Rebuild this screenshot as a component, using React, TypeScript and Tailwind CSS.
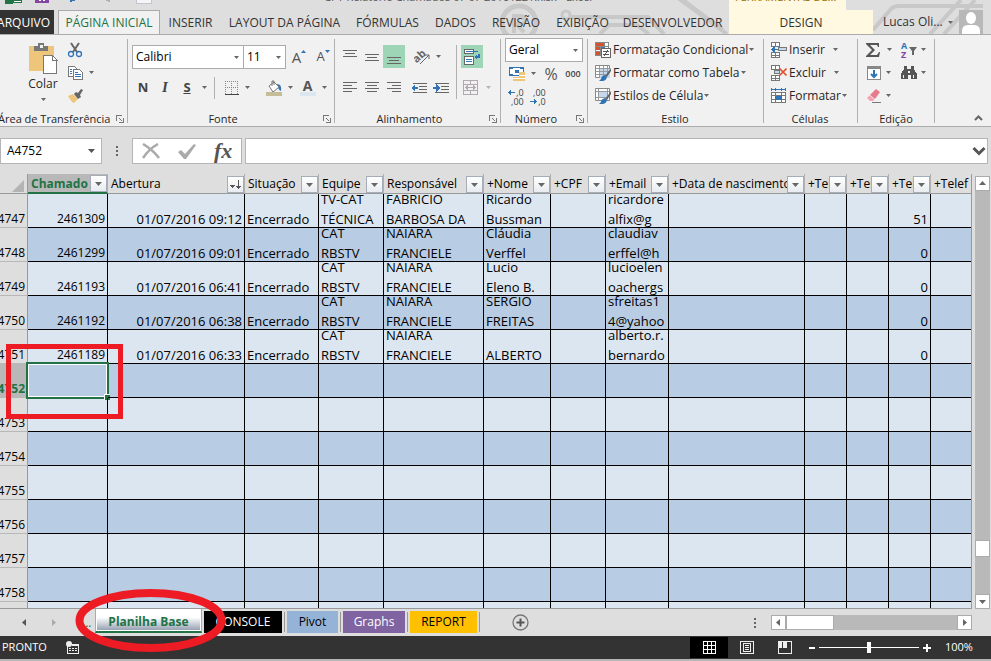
import type { ReactNode } from "react";

const ui = "font-['Open_Sans','Noto_Sans',sans-serif]";

function Caret({ light = false }: { light?: boolean }) {
  return (
    <svg width="5" height="3" viewBox="0 0 5 3" className={light ? "shrink-0 fill-[#b5b5b5]" : "shrink-0 fill-[#666]"} aria-hidden="true">
      <path d="M0 0h5L2.500 3z" />
    </svg>
  );
}

function Svg({ w = 16, h = 16, children, crisp = true }: { w?: number; h?: number; children: ReactNode; crisp?: boolean }) {
  return (
    <svg width={w} height={h} viewBox={`0 0 ${w} ${h}`} fill="none" shapeRendering={crisp ? "crispEdges" : "auto"} className="shrink-0" aria-hidden="true">
      {children}
    </svg>
  );
}

function Tool({ label, className = "w-[22px]", children }: { label: string; className?: string; children: ReactNode }) {
  return (
    <button type="button" aria-label={label} className={`flex h-[23px] shrink-0 items-center justify-center ${className}`}>
      {children}
    </button>
  );
}

function Launcher() {
  return (
    <button type="button" aria-label="Mais opções" className="absolute right-[3px] bottom-0">
      <Svg w={8} h={8}>
        <path d="M.5 6V.5H6M3 3l3 3M7.500 3v4.500H3" stroke="#777" />
      </Svg>
    </button>
  );
}

function Group({ title, className, launcher = false, align = "text-center", children }: { title: string; className: string; launcher?: boolean; align?: string; children: ReactNode }) {
  return (
    <section aria-label={title} className={`relative flex h-[84px] shrink-0 flex-col border-r border-[#b0b0b0] ${className}`}>
      <div className="-mt-px flex-1">{children}</div>
      <h2 className={`h-2 text-[11px] leading-2 whitespace-nowrap ${align}`}>{title}</h2>
      {launcher && <Launcher />}
    </section>
  );
}

function Picker({ label, value, className }: { label: string; value: string; className: string }) {
  return (
    <div className={`relative flex h-6 shrink-0 items-center border border-[#ababab] bg-white ${className}`}>
      <select aria-label={label} defaultValue={value} className="h-full w-full appearance-none bg-transparent pl-[3px] text-xs text-black outline-none">
        <option>{value}</option>
      </select>
      <span className="pointer-events-none absolute right-1 flex">
        <Caret />
      </span>
    </div>
  );
}

function Lines({ rows }: { rows: [number, number, number][] }) {
  return (
    <Svg w={14} h={14}>
      {rows.map(([x, y, w]) => (
        <path key={y} d={`M${x} ${y + 0.5}h${w}`} stroke="#666" />
      ))}
    </Svg>
  );
}

const tabs = [
  { name: "INSERIR", cls: "w-[61px]" },
  { name: "LAYOUT DA PÁGINA", cls: "w-[127px]" },
  { name: "FÓRMULAS", cls: "w-[79px]" },
  { name: "DADOS", cls: "w-[57px]" },
  { name: "REVISÃO", cls: "w-[64px]" },
  { name: "EXIBIÇÃO", cls: "w-[69px]" },
  { name: "DESENVOLVEDOR", cls: "w-[111px]" },
];

function Header() {
  return (
    <header className="relative h-[34px] shrink-0 overflow-hidden">
      <svg className="absolute top-0 right-0" width="500" height="34" viewBox="0 0 500 34" fill="none" stroke="#c8c8c8" strokeWidth="4" aria-hidden="true">
        <circle cx="28" cy="23" r="17" strokeWidth="5" />
        <path d="M23 33V16h7a4 4 0 0 1 0 8h-5l8 8" />
        <circle cx="75" cy="15" r="4" strokeWidth="3" />
        <path d="M79 17h78l16 17M109 34l9-9h28l12 9M187 -2l49 36M192 0l40 30" />
        <path d="M382 30L400 9q3-3 8-3h84M439 34L470 0M453 34L484 0" />
      </svg>
      <div className="relative flex h-[10px] overflow-hidden">
        <div className="flex w-[324px] items-start">
          <Svg w={160} h={10}>
            <path d="M5 0h8v4H5z" fill="#217346" />
            <path d="M13 0h8v2h-8z" fill="#fff" stroke="#217346" />
            <path d="M35 0h14v3H35z" fill="#8445a5" />
            <path d="M39 0h2v1h-2zM43 0h2v1h-2z" fill="#fff" />
            <path d="M70 0h5v1h-3v1h-2z" fill="#2f75b5" />
            <path d="M106 0h4v2h-2V1h-2z" fill="#b0b0b0" />
            <path d="M136.500 0v3.500h15V0" fill="#f5f5f8" stroke="#c4c4cc" />
          </Svg>
        </div>
        <p className="-mt-[11px] h-4 flex-1 text-[11px] leading-4 whitespace-nowrap text-[#555]">CPT Relatório Chamados 07 07 20161221.xlsx - Excel</p>
        <p className="mr-[145px] h-[10px] w-[117px] shrink-0 bg-[#fff9e1] pl-[6px] text-[11px] whitespace-nowrap text-[#957000]">
          <span className="-mt-[11px] block leading-4">FERRAMENTAS DE...</span>
        </p>
      </div>
      <nav className="relative flex h-6 text-xs leading-[22px] whitespace-nowrap text-[#333]">
        <button type="button" className="flex w-[54px] shrink-0 justify-end bg-[#333] pt-[2px] pr-1 text-white">ARQUIVO</button>
        <button type="button" className="ml-1 w-[102px] shrink-0 border border-b-0 border-[#ababab] bg-[#f1f1f1] pt-px text-[#217346]">PÁGINA INICIAL</button>
        {tabs.map((t) => (
          <button key={t.name} type="button" className={`shrink-0 pt-[2px] text-center ${t.cls}`}>{t.name}</button>
        ))}
        <div className="flex-1" />
        <button type="button" className="w-36 shrink-0 bg-[#fff9e1] pt-[2px]">DESIGN</button>
        <button type="button" className="flex w-[86px] shrink-0 items-center justify-between pr-[6px] pl-[10px]">
          Lucas Oli... <Caret />
        </button>
        <div className="mr-2 h-6 w-6 shrink-0 bg-[#b8b8b8]">
          <Svg w={24} h={24} crisp={false}>
            <ellipse cx="12" cy="8" rx="5" ry="6" fill="#fff" />
            <path d="M3 24v-3q0-6 6-6h6q6 0 6 6v3z" fill="#fff" />
          </Svg>
        </div>
      </nav>
    </header>
  );
}

function TableIcon({ kind }: { kind: "cond" | "table" | "cell" }) {
  if (kind === "cond")
    return (
      <Svg>
        <path d="M.5.5h13v13H.5zM5 .5v13M9.500 .5v6M0 4.500h14M0 9.500h6" stroke="#888" fill="#fff" />
        <path d="M1 1h8v3H1zM1 5h4v3H1zM1 10h4v3H1z" fill="#d35230" />
        <path d="M6 5h4v3H6z" fill="#3a7ab8" />
        <path d="M6.500 6.500h9v9h-9z" fill="#fff" stroke="#666" />
        <path d="M8 9.500h6M8 12.500h6M12.500 8l-3 6" stroke="#555" />
      </Svg>
    );
  return (
    <Svg crisp={false}>
      <path d="M.5.5h14v12H.5z" fill="#fff" stroke="#888" />
      {kind === "table" ? <path d="M5 4h10v9H5z" fill="#c5d9ee" /> : <path d="M4 4h8v6H4z" fill="#c5d9ee" />}
      {kind === "table" ? (
        <path d="M4.500 1v12M8.500 1v12M12.500 1v8M1 3.500h13M1 6.500h13M1 9.500h10" stroke="#999" />
      ) : (
        <path d="M3.500 1v12M12.500 1v8M1 3.500h13M1 9.500h10" stroke="#999" />
      )}
      <path d="M16 3l-6 8 2 1 4-6z" fill="#666" />
      <path d="M10 10q-4 1-4 4l-2 2q7 1 8-4z" fill="#2f75b5" />
    </Svg>
  );
}

function CellsIcon({ kind }: { kind: "ins" | "del" | "fmt" }) {
  if (kind === "fmt")
    return (
      <Svg>
        <path d="M1 1.500h13M.5 0v3M14.500 0v3M4.500 0v3M10.500 0v3" stroke="#2f75b5" />
        <path d="M.5 4.500h14v10H.5zM4.500 4v11M10.500 4v11M0 7.500h15M0 11.500h15" stroke="#777" fill="#fff" />
        <path d="M4 8h7v4H4z" fill="#2f75b5" />
      </Svg>
    );
  return (
    <Svg>
      <path d="M.5.5h8v4h-8zM4.500 0v5M.5 10.500h8v5h-8zM4.500 10v6M.5 13h8" stroke="#777" fill="#fff" />
      {kind === "ins" ? (
        <>
          <path d="M7.500 5.500h8v3h-8z" fill="#c5d9ee" stroke="#777" />
          <path d="M1 7.500h6" stroke="#2f75b5" />
          <path d="M0 7.500L4 4v7z" fill="#2f75b5" />
        </>
      ) : (
        <>
          <path d="M3.500 5.500h5v3h-5z" fill="#c5d9ee" stroke="#777" />
          <path d="M8.500 3.500l7 7M15.500 3.500l-7 7" stroke="#e0522c" strokeWidth="1.700" shapeRendering="auto" />
        </>
      )}
    </Svg>
  );
}

function Command({ icon, text, gap = "gap-px" }: { icon: ReactNode; text: string; gap?: string }) {
  return (
    <button type="button" className="flex h-[23px] items-center gap-[2px] whitespace-nowrap">
      {icon}
      <span className={`flex items-center text-[12px] ${gap}`}>
        {text} <Caret />
      </span>
    </button>
  );
}

function Ribbon() {
  return (
    <div className="relative flex h-[93px] shrink-0 border-t border-b border-[#ababab] bg-[#f1f1f1] pt-1 text-[#262626]">
      <Group title="Área de Transferência" className="w-32" align="-ml-[2px]" launcher>
        <div className="flex pt-px pl-[26px]">
          <button type="button" className="flex w-[34px] flex-col items-center pt-1 text-xs">
            <Svg w={30} h={31}>
              <path d="M1 3h25v25H1z" fill="#edc57b" />
              <path d="M6 3h4V0h6v3h4v5H6z" fill="#777" />
              <path d="M12 2h3v3h-3z" fill="#f1f1f1" />
              <path d="M15.500 12.500h9l4 4v14h-13z" fill="#fff" stroke="#777" />
              <path d="M24.500 12v5h5" stroke="#777" />
            </Svg>
            <span className="mt-[2px] mb-[6px] leading-4">Colar</span>
            <Caret />
          </button>
          <div className="flex flex-col pl-[7px]">
            <button type="button" aria-label="Recortar" className="flex h-[22px] items-center">
              <Svg crisp={false}>
                <path d="M4 1l6 9M12 1L6 10" stroke="#666" strokeWidth="2" />
                <circle cx="4" cy="12" r="2.500" stroke="#2f75b5" strokeWidth="1.300" />
                <circle cx="12" cy="12" r="2.500" stroke="#2f75b5" strokeWidth="1.300" />
              </Svg>
            </button>
            <button type="button" aria-label="Copiar" className="flex h-[23px] items-center gap-[6px]">
              <Svg>
                <path d="M1.500 1.500h6l2 2v8h-8z" fill="#fff" stroke="#777" />
                <path d="M6.500 4.500h6l3 3v7h-9z" fill="#fff" stroke="#777" />
                <path d="M3 4.500h2M3 6.500h2M3 8.500h2M8 7.500h3M8 9.500h6M8 11.500h6" stroke="#2f75b5" />
              </Svg>
              <Caret />
            </button>
            <button type="button" aria-label="Pincel de Formatação" className="flex h-[23px] items-center">
              <Svg crisp={false}>
                <path d="M1 8l5-2 5 5-4 4q-2 0-6-7z" fill="#edc57b" />
                <path d="M7 6l2-2 2 1 3-4 2 1-3 5 1 2-3 2z" fill="#666" />
              </Svg>
            </button>
          </div>
        </div>
      </Group>

      <Group title="Fonte" className="w-[207px]" align="pr-4 text-center" launcher>
        <div className="flex items-center pt-[7px] pl-1">
          <Picker label="Fonte" value="Calibri" className="w-[112px]" />
          <Picker label="Tamanho da fonte" value="11" className="-ml-px w-[43px]" />
          <Tool label="Aumentar fonte" className="ml-1 w-[18px]">
            <span className="text-[15px] text-[#555]">A</span>
            <svg width="5" height="3" viewBox="0 0 5 3" className="mb-3 fill-[#2f75b5]" aria-hidden="true"><path d="M0 3h5L2.500 0z" /></svg>
          </Tool>
          <Tool label="Diminuir fonte" className="ml-[6px] w-[18px]">
            <span className="text-[13px] text-[#555]">A</span>
            <svg width="5" height="3" viewBox="0 0 5 3" className="mb-3 fill-[#2f75b5]" aria-hidden="true"><path d="M0 0h5L2.500 3z" /></svg>
          </Tool>
        </div>
        <div className="flex items-center pt-[7px] pl-1 text-[13px] text-[#444]">
          <Tool label="Negrito"><b>N</b></Tool>
          <Tool label="Itálico"><i className="font-['Liberation_Serif',serif] text-[15px] font-bold">I</i></Tool>
          <Tool label="Sublinhado"><b className="underline">S</b></Tool>
          <Tool label="Tipo de sublinhado" className="w-3"><Caret /></Tool>
          <span className="ml-1 h-[22px] w-px bg-[#b0b0b0]" />
          <Tool label="Bordas" className="ml-[7px] w-[30px] gap-[6px]">
            <Svg w={14} h={14}>
              <path d="M.5 0v13M6.500 0v13M12.500 0v13M0 .5h13M0 6.500h13" stroke="#888" strokeDasharray="1 1" />
              <path d="M0 13.500h14" stroke="#444" />
            </Svg>
            <Caret />
          </Tool>
          <Tool label="Cor de preenchimento" className="ml-3 w-[30px] gap-[6px]">
            <Svg crisp={false}>
              <path d="M11 4q5 0 4 7-3-1-4-7z" fill="#2f75b5" />
              <path d="M3 6l5-4 5 5-6 5z" fill="#fff" stroke="#777" />
              <path d="M6 6V1h2v4" stroke="#777" />
              <path d="M0 12h16v4H0z" fill="#c4bd97" />
            </Svg>
            <Caret />
          </Tool>
          <Tool label="Cor da fonte" className="ml-1 w-[30px] gap-[6px]">
            <span className="h-[17px] w-4 border-b-4 border-[#dce6f1] text-center text-[14px] leading-[13px] font-bold text-[#555]">A</span>
            <Caret />
          </Tool>
        </div>
      </Group>

      <Group title="Alinhamento" className="w-[166px] pl-1" align="pr-5 text-center" launcher>
        <div className="flex pt-[7px]">
          <div className="flex w-[118px] flex-col gap-2 border-r border-[#b0b0b0]">
            <div className="flex">
              <Tool label="Alinhar em cima"><Lines rows={[[0, 0, 14], [2, 3, 10], [0, 6, 14]]} /></Tool>
              <Tool label="Alinhar no meio"><Lines rows={[[0, 4, 14], [2, 7, 10], [0, 10, 14]]} /></Tool>
              <Tool label="Alinhar embaixo" className="w-[22px] bg-[#9fd5b7]"><Lines rows={[[0, 7, 14], [2, 10, 10], [0, 13, 14]]} /></Tool>
              <Tool label="Orientação" className="ml-1 w-9 gap-1">
                <Svg crisp={false} w={18}>
                  <text x="0" y="10" fontSize="11" fontWeight="bold" fill="#666" transform="rotate(-42 7 9)">ab</text>
                  <path d="M6 15L15 6M11 6h4v4" stroke="#666" />
                </Svg>
                <Caret />
              </Tool>
            </div>
            <div className="flex">
              <Tool label="Alinhar à esquerda"><Lines rows={[[0, 1, 14], [0, 4, 9], [0, 7, 14], [0, 10, 9]]} /></Tool>
              <Tool label="Centralizar"><Lines rows={[[0, 1, 14], [2, 4, 10], [0, 7, 14], [2, 10, 10]]} /></Tool>
              <Tool label="Alinhar à direita"><Lines rows={[[0, 1, 14], [5, 4, 9], [0, 7, 14], [5, 10, 9]]} /></Tool>
              <Tool label="Diminuir recuo" className="ml-[3px] w-[22px]">
                <Svg>
                  <path d="M2 3.500h14M8 6.500h8M8 9.500h8M2 12.500h14" stroke="#666" />
                  <path d="M2 8h5" stroke="#2f75b5" strokeWidth="2" />
                  <path d="M0 8l4-4v8z" fill="#2f75b5" />
                </Svg>
              </Tool>
              <Tool label="Aumentar recuo">
                <Svg>
                  <path d="M2 3.500h14M8 6.500h8M8 9.500h8M2 12.500h14" stroke="#666" />
                  <path d="M0 8h4" stroke="#2f75b5" strokeWidth="2" />
                  <path d="M7 8L3 4v8z" fill="#2f75b5" />
                </Svg>
              </Tool>
            </div>
          </div>
          <div className="flex flex-col gap-2 pl-1">
            <Tool label="Quebrar texto" className="w-[22px] bg-[#9fd5b7]">
              <Svg>
                <path d="M.5.5h9v4h-9zM.5 7.500h9v8h-9z" fill="#fff" stroke="#666" />
                <path d="M2 2.500h12M2 10.500h6M2 12.500h6" stroke="#2f75b5" />
                <path d="M14.500 5v3h-2" stroke="#2f75b5" strokeWidth="2" />
                <path d="M10 8l3-3v6z" fill="#2f75b5" />
              </Svg>
            </Tool>
            <Tool label="Mesclar e centralizar" className="w-[31px] gap-[7px]">
              <Svg>
                <path d="M.5.5h14v14H.5zM.5 4.500h14M.5 10.500h14M7.500 0v4M7.500 11v4M3 7.500h9M5 5.500l-2 2 2 2M10 5.500l2 2-2 2" stroke="#b0a9b0" />
              </Svg>
              <Caret light />
            </Tool>
          </div>
        </div>
      </Group>

      <Group title="Número" className="w-[87px] pl-1" align="pr-5 text-center" launcher>
        <Picker label="Formato de número" value="Geral" className="w-[78px]" />
        <div className="flex">
          <Tool label="Formato de contabilização" className="w-[34px] gap-[6px]">
            <Svg>
              <path d="M0 1h15v9H0z" fill="#2f75b5" />
              <path d="M4 2h7v1h3v5h-3v1H4V8H1V3h3z" fill="#fff" />
              <path d="M6 4h4v3H6z" fill="#2f75b5" />
              <path d="M10 6h6v9h-6zM4 11h7v4H4z" fill="#edc57b" />
              <path d="M10 9.500h6M10 12.500h6M4 12.500h6" stroke="#fff" />
            </Svg>
            <Caret />
          </Tool>
          <Tool label="Porcentagem" className="w-6"><span className="text-base text-[#555]">%</span></Tool>
          <Tool label="Separador de milhares" className="w-[20px]"><span className="text-[9px] font-semibold text-[#444]">000</span></Tool>
        </div>
        <div className="flex text-[9px] leading-[9px] text-[#444]">
          <Tool label="Aumentar casas decimais" className="w-[22px]">
            <span className="flex flex-col items-end">
              <span className="flex items-center gap-px">
                <Svg w={7} h={5}><path d="M2 2.500h5" stroke="#2f75b5" /><path d="M0 2.500L3 0v5z" fill="#2f75b5" /></Svg>,0
              </span>
              <span>,00</span>
            </span>
          </Tool>
          <Tool label="Diminuir casas decimais">
            <span className="flex flex-col items-end">
              <span>,00</span>
              <span className="flex items-center gap-px">
                <Svg w={7} h={5}><path d="M0 2.500h5" stroke="#2f75b5" /><path d="M7 2.500L4 0v5z" fill="#2f75b5" /></Svg>,0
              </span>
            </span>
          </Tool>
        </div>
      </Group>

      <Group title="Estilo" className="w-[176px] pl-[7px]" align="pr-2 text-center">
        <Command icon={<TableIcon kind="cond" />} text="Formatação Condicional" />
        <Command icon={<TableIcon kind="table" />} text="Formatar como Tabela" />
        <Command icon={<TableIcon kind="cell" />} text="Estilos de Célula" />
      </Group>

      <Group title="Células" className="w-[94px] pl-[7px]" align="pr-2 text-center">
        <Command icon={<CellsIcon kind="ins" />} text="Inserir" gap="gap-2" />
        <Command icon={<CellsIcon kind="del" />} text="Excluir" gap="gap-2" />
        <Command icon={<CellsIcon kind="fmt" />} text="Formatar" />
      </Group>

      <Group title="Edição" className="w-[77px]">
        <div className="flex pl-[7px]">
          <Tool label="AutoSoma" className="w-[27px] gap-[6px]">
            <Svg crisp={false}>
              <path d="M1 1h13v4h-1l-1-2H5l5 5-5 5h7l2-3h1l-1 5H1v-1l6-6-6-6z" fill="#555" />
            </Svg>
            <Caret />
          </Tool>
          <Tool label="Classificar e Filtrar" className="ml-2 w-[27px] gap-1">
            <Svg crisp={false}>
              <text x="0" y="7" fontSize="9" fontWeight="bold" fill="#2f75b5">A</text>
              <text x="0" y="16" fontSize="9" fontWeight="bold" fill="#8445a5">Z</text>
              <path d="M8 5h8l-3 4v4h-2V9z" fill="#666" />
            </Svg>
            <Caret />
          </Tool>
        </div>
        <div className="flex pl-[7px]">
          <Tool label="Preencher" className="w-[27px] gap-1">
            <Svg>
              <path d="M1.500 1.500h13v13h-13z" fill="#fff" stroke="#888" />
              <path d="M1 1h14v3H1z" fill="#888" />
              <path d="M8 5v7M5 9l3 3 3-3" stroke="#2f75b5" strokeWidth="2" shapeRendering="auto" />
            </Svg>
            <Caret />
          </Tool>
          <Tool label="Localizar e Selecionar" className="ml-2 w-[27px] gap-1">
            <Svg>
              <path d="M3 1h3v3h4V1h3v3l3 5v5h-6v-4H7v4H0V9l3-5z" fill="#555" />
              <path d="M2 10h1v3H2zM12 10h1v3h-1zM7 6h2v2H7z" fill="#f1f1f1" />
            </Svg>
            <Caret />
          </Tool>
        </div>
        <div className="flex pl-[7px]">
          <Tool label="Limpar" className="w-[27px] gap-1">
            <Svg crisp={false}>
              <path d="M10 1l4 3-5 7-5-4z" fill="#e87a8e" />
              <path d="M3.500 7.500L8.500 11.500 7 13H4L1 10z" fill="#f2a4b1" />
              <path d="M6 14.500h9" stroke="#777" />
            </Svg>
            <Caret />
          </Tool>
        </div>
      </Group>
      <button type="button" aria-label="Recolher a Faixa de Opções" className="ml-auto flex items-end pr-2 pb-[5px]">
        <Svg w={9} h={6} crisp={false}><path d="M1 5l3.500-3.500L8 5" stroke="#666" strokeWidth="2" /></Svg>
      </button>
    </div>
  );
}

function FormulaBar() {
  return (
    <div className="flex h-[47px] shrink-0 items-start pt-[11px] pr-[3px]">
      <div className="relative flex h-[26px] w-[102px] shrink-0 items-center border border-[#b5b5b5] bg-white">
        <input aria-label="Caixa de nome" defaultValue="A4752" className="w-full bg-transparent pl-[6px] text-xs outline-none" />
        <svg width="7" height="4" viewBox="0 0 7 4" className="absolute right-[6px] fill-[#555]" aria-hidden="true"><path d="M0 0h7L3.500 4z" /></svg>
      </div>
      <div className="flex h-[26px] w-[30px] shrink-0 items-center justify-center">
        <Svg w={2} h={10}><path d="M0 0h2v2H0zM0 4h2v2H0zM0 8h2v2H0z" fill="#666" /></Svg>
      </div>
      <div className="flex h-[26px] w-[110px] shrink-0 items-center justify-around border border-[#b5b5b5] bg-white">
        <button type="button" aria-label="Cancelar">
          <Svg w={18} h={16} crisp={false}><path d="M1 1q10 6 16 14M16 1Q7 6 1 15" stroke="#aaa" strokeWidth="2.500" /></Svg>
        </button>
        <button type="button" aria-label="Inserir">
          <Svg w={20} h={16} crisp={false}><path d="M1 9l3-2 4 4 9-10 2 1L9 16H7z" fill="#aaa" /></Svg>
        </button>
        <button type="button" aria-label="Inserir função" className="font-['Liberation_Serif',serif] text-[22px] leading-6 font-bold text-[#555] italic">fx</button>
      </div>
      <div className="ml-[3px] flex h-[26px] flex-1 items-center border border-[#b5b5b5] bg-white pr-px">
        <input aria-label="Barra de fórmulas" className="h-full min-w-0 flex-1 bg-transparent px-2 text-xs outline-none" />
        <Svg w={14} h={10} crisp={false}><path d="M1.500 2L7 7.500 12.500 2" stroke="#555" strokeWidth="3" /></Svg>
      </div>
    </div>
  );
}

const columns = [
  { name: "Chamado", col: "w-20" },
  { name: "Abertura", col: "w-[137px]" },
  { name: "Situação", col: "w-[74px]" },
  { name: "Equipe", col: "w-[65px]" },
  { name: "Responsável", col: "w-[100px]" },
  { name: "+Nome", col: "w-[67px]" },
  { name: "+CPF", col: "w-[55px]" },
  { name: "+Email", col: "w-[63px]" },
  { name: "+Data de nascimento", col: "w-[136px]" },
  { name: "+Telefone", col: "w-[42px]" },
  { name: "+Telefone", col: "w-[42px]" },
  { name: "+Telefone", col: "w-[42px]" },
  { name: "+Telef", col: "" },
];

const data: string[][] = [
  ["2461309", "01/07/2016 09:12", "Encerrado", "TV-CAT\nTÉCNICA", "FABRICIO\nBARBOSA DA", "Ricardo\nBussman", "", "ricardore\nalfix@g", "", "", "", "51", ""],
  ["2461299", "01/07/2016 09:01", "Encerrado", "CAT\nRBSTV", "NAIARA\nFRANCIELE", "Cláudia\nVerffel", "", "claudiav\nerffel@h", "", "", "", "0", ""],
  ["2461193", "01/07/2016 06:41", "Encerrado", "CAT\nRBSTV", "NAIARA\nFRANCIELE", "Lucio\nEleno B.", "", "lucioelen\noachergs", "", "", "", "0", ""],
  ["2461192", "01/07/2016 06:38", "Encerrado", "CAT\nRBSTV", "NAIARA\nFRANCIELE", "SERGIO\nFREITAS", "", "sfreitas1\n4@yahoo", "", "", "", "0", ""],
  ["2461189", "01/07/2016 06:33", "Encerrado", "CAT\nRBSTV", "NAIARA\nFRANCIELE", "ALBERTO", "", "alberto.r.\nbernardo", "", "", "", "0", ""],
];

const rowNumbers = [4747, 4748, 4749, 4750, 4751, 4752, 4753, 4754, 4755, 4756, 4757, 4758, 4759];

function Selection() {
  return (
    <>
      <div className="pointer-events-none absolute -inset-[2px] border-2 border-[#217346]">
        <div className="h-full border border-white" />
        <div className="absolute -right-[3px] -bottom-[3px] h-[6px] w-[6px] border-t border-l border-white bg-[#217346]" />
      </div>
      <div className="pointer-events-none absolute -top-5 -left-[22px] z-10 h-[75px] w-[117px] border-5 border-[#ed1c24]" />
    </>
  );
}

function Sheet() {
  return (
    <div className="min-h-0 flex-1 overflow-hidden border-r border-b border-[#999]">
      <table className="w-full table-fixed border-separate border-spacing-0 text-[12px] text-black">
        <colgroup>
          <col className="w-7" />
          {columns.map((c, i) => <col key={i} className={c.col} />)}
        </colgroup>
        <thead>
          <tr className="h-5">
            <th className="border-r border-b border-[#999] p-0" aria-label="Selecionar tudo">
              <div className="flex justify-end pt-1 pr-[3px]"><Svg w={12} h={12} crisp={false}><path d="M12 0v12H0z" fill="#b4b4b4" /></Svg></div>
            </th>
            {columns.map((c, i) => (
              <th key={i} scope="col" className={`p-0 text-left ${i < 12 ? "border-r border-r-[#b0b0b0]" : ""} ${i === 0 ? "border-b-2 border-b-[#217346] bg-[#b8b8b8] font-bold text-[#217346]" : "border-b border-b-[#999] font-normal"}`}>
                <div className={`relative overflow-hidden pl-[3px] leading-[19px] whitespace-nowrap ${i === 0 ? "h-[18px]" : "h-[19px]"}`}>
                  {c.name}
                  {i < 12 && (
                    <button type="button" aria-label={`Filtrar ${c.name}`} className="absolute right-0 bottom-0 flex h-[17px] w-[17px] items-center justify-center border border-[#a5adb8] bg-gradient-to-b from-white to-[#e8ecf0]">
                      {i === 1 ? (
                        <Svg w={11} h={9}><path d="M0 5h5L2.500 8zM8 0h1v8H8zM6 6h5L8.500 9z" fill="#555" /></Svg>
                      ) : (
                        <svg width="7" height="4" viewBox="0 0 7 4" className="fill-[#666]" aria-hidden="true"><path d="M0 0h7L3.500 4z" /></svg>
                      )}
                    </button>
                  )}
                </div>
              </th>
            ))}
          </tr>
        </thead>
        <tbody>
          {rowNumbers.map((n, r) => (
            <tr key={n} className={r % 2 ? "bg-[#b8cce4]" : "bg-[#dce6f0]"}>
              <th scope="row" className={`border-r border-b border-r-[#999] border-b-[#b8b8b8] p-0 ${n === 4752 ? "bg-[#b8b8b8] font-bold text-[#217346]" : "bg-[#dedede] font-normal"}`}>
                <div className="flex h-[33px] items-end justify-end overflow-hidden pr-[2px] leading-5">
                  <span className="-mb-[2px]">{n}</span>
                </div>
              </th>
              {columns.map((c, i) => (
                <td key={i} className={`relative border-b border-black p-0 ${i < 12 ? "border-r" : ""}`}>
                  <div className={`flex h-[33px] items-end overflow-hidden px-[2px] leading-5 whitespace-pre ${i < 2 || i === 11 ? "justify-end" : ""} ${i === 0 ? "" : "text-[13px]"}`}>
                    <span className="-mb-[2px]">{data[r]?.[i] ?? ""}</span>
                  </div>
                  {n === 4752 && i === 0 && <Selection />}
                </td>
              ))}
            </tr>
          ))}
        </tbody>
      </table>
    </div>
  );
}

function ArrowButton({ label, d }: { label: string; d: string }) {
  return (
    <button type="button" aria-label={label} className="flex h-[15px] w-[15px] shrink-0 items-center justify-center border border-[#ababab] bg-white">
      <svg width="7" height="7" viewBox="0 0 7 7" className="fill-[#666]" aria-hidden="true"><path d={d} /></svg>
    </button>
  );
}

const sheets = [
  { name: "CONSOLE", cls: "w-[78px] bg-black text-white" },
  { name: "Pivot", cls: "w-[51px] bg-[#95b3d7] text-black" },
  { name: "Graphs", cls: "w-[62px] bg-[#8064a2] text-white" },
  { name: "REPORT", cls: "w-[67px] bg-[#ffc000] text-black" },
];

function SheetTabs() {
  return (
    <div className="flex h-[27px] shrink-0 items-start pr-[19px] text-xs">
      <div className="flex h-[27px] w-[95px] shrink-0 items-center pl-[22px]">
        <button type="button" aria-label="Planilha anterior"><Svg w={30} h={7} crisp={false}><path d="M4 0v7L0 3.500z" fill="#555" /></Svg></button>
        <button type="button" aria-label="Próxima planilha"><Svg w={4} h={7} crisp={false}><path d="M0 0v7l4-3.500z" fill="#aaa" /></Svg></button>
        <span className="ml-[26px] text-[#217346]">...</span>
      </div>
      <div className="relative shrink-0">
        <button type="button" className="flex h-6 w-[107px] flex-col border-x border-b-2 border-[#ababab] border-b-[#217346] bg-white px-px font-bold text-[#217346]">
          <span className="block w-full bg-gradient-to-b from-white from-40% to-[#98a2b3] pt-1 leading-[17px]">Planilha Base</span>
        </button>
        <svg className="pointer-events-none absolute -top-[21px] -left-5 z-20" width="152" height="65" viewBox="0 0 152 65" fill="none" aria-hidden="true">
          <ellipse cx="75.500" cy="32.500" rx="71" ry="27.500" stroke="#ed1c24" strokeWidth="8" />
        </svg>
      </div>
      <div className="flex gap-[2px] pt-[2px] pl-[2px]">
        {sheets.map((s) => (
          <div key={s.name} className="flex items-center gap-[2px]">
            <button type="button" className={`h-[22px] ${s.cls}`}>{s.name}</button>
            <span className="h-5 w-px bg-[#999]" />
          </div>
        ))}
      </div>
      <button type="button" aria-label="Nova planilha" className="ml-8 flex h-[27px] items-center">
        <Svg w={17} h={17} crisp={false}>
          <circle cx="8.500" cy="8.500" r="7.500" stroke="#777" strokeWidth="1.300" />
          <path d="M4.500 8.500h8M8.500 4.500v8" stroke="#555" strokeWidth="2" />
        </Svg>
      </button>
      <div className="ml-auto flex h-[27px] items-center gap-[15px]">
        <Svg w={2} h={10}><path d="M0 0h2v2H0zM0 4h2v2H0zM0 8h2v2H0z" fill="#666" /></Svg>
        <div className="flex h-[15px] w-[201px] bg-[#b9b9b9]">
          <ArrowButton label="Rolar para a esquerda" d="M5 0v7L1 3.500z" />
          <div className="h-[15px] w-12 border border-[#ababab] bg-white" />
          <div className="flex-1" />
          <ArrowButton label="Rolar para a direita" d="M2 0v7l4-3.500z" />
        </div>
      </div>
    </div>
  );
}

function StatusBar() {
  return (
    <footer className="flex h-[25px] shrink-0 items-center border-b-2 border-[#b5b5b5] bg-[#333] text-[11px] text-white">
      <span className="w-[66px] pl-[2px]">PRONTO</span>
      <button type="button" aria-label="Gravar macro">
        <Svg w={14} h={13}>
          <path d="M1.500 3.500h11v9h-11z" stroke="#eee" />
          <path d="M6 3h7v2H6z" fill="#eee" />
          <path d="M3 7.500h9M3 9.500h9" stroke="#eee" strokeDasharray="2 1" />
          <circle cx="3" cy="3" r="3" fill="#eee" shapeRendering="auto" />
        </Svg>
      </button>
      <div className="ml-auto flex h-[23px] items-center">
        <button type="button" aria-label="Normal" className="flex h-[21px] w-[38px] items-center justify-center bg-black">
          <Svg w={13} h={13}><path d="M.5.5h12v12H.5zM4.500 0v13M8.500 0v13M0 4.500h13M0 8.500h13" stroke="#fff" /></Svg>
        </button>
        <button type="button" aria-label="Layout da Página" className="flex w-[38px] justify-center">
          <Svg w={14} h={13}><path d="M.5.5h13v12H.5zM3.500 2.500h7v8h-7zM5 4.500h4M5 6.500h4M5 8.500h4" stroke="#eee" /></Svg>
        </button>
        <button type="button" aria-label="Visualização de Quebra de Página" className="flex w-[38px] justify-center">
          <Svg w={14} h={13}><path d="M.5.5h13v12H.5z" stroke="#eee" /><path d="M0 0h4v7H0zM5 0h4v7H5z" fill="#eee" /></Svg>
        </button>
        <button type="button" aria-label="Reduzir" className="mr-1 ml-[5px]"><Svg w={6} h={8}><path d="M0 3h6v2H0z" fill="#fff" /></Svg></button>
        <input
          type="range"
          aria-label="Zoom"
          defaultValue={50}
          className="h-3 w-[100px] appearance-none bg-[linear-gradient(#fff,#fff)] bg-[length:100%_1px] bg-center bg-no-repeat [&::-webkit-slider-thumb]:h-[11px] [&::-webkit-slider-thumb]:w-1 [&::-webkit-slider-thumb]:appearance-none [&::-webkit-slider-thumb]:bg-white"
        />
        <button type="button" aria-label="Ampliar" className="ml-1"><Svg w={8} h={8}><path d="M0 3h8v2H0zM3 0h2v8H3z" fill="#fff" /></Svg></button>
        <span className="w-[60px] pl-[14px]">100%</span>
      </div>
    </footer>
  );
}

export default function App() {
  return (
    <div className={`flex h-screen w-full flex-col overflow-hidden bg-[#dedede] ${ui}`}>
      <Header />
      <Ribbon />
      <FormulaBar />
      <div className="flex min-h-0 flex-1">
        <Sheet />
        <div className="mt-[2px] mr-px ml-[3px] flex w-[15px] shrink-0 flex-col bg-[#b9b9b9]">
          <ArrowButton label="Rolar para cima" d="M0 5h7L3.500 1z" />
          <div className="flex-1" />
          <div className="mb-[37px] h-[17px] border border-[#ababab] bg-white" />
          <ArrowButton label="Rolar para baixo" d="M0 2h7L3.500 6z" />
        </div>
      </div>
      <SheetTabs />
      <StatusBar />
    </div>
  );
}
